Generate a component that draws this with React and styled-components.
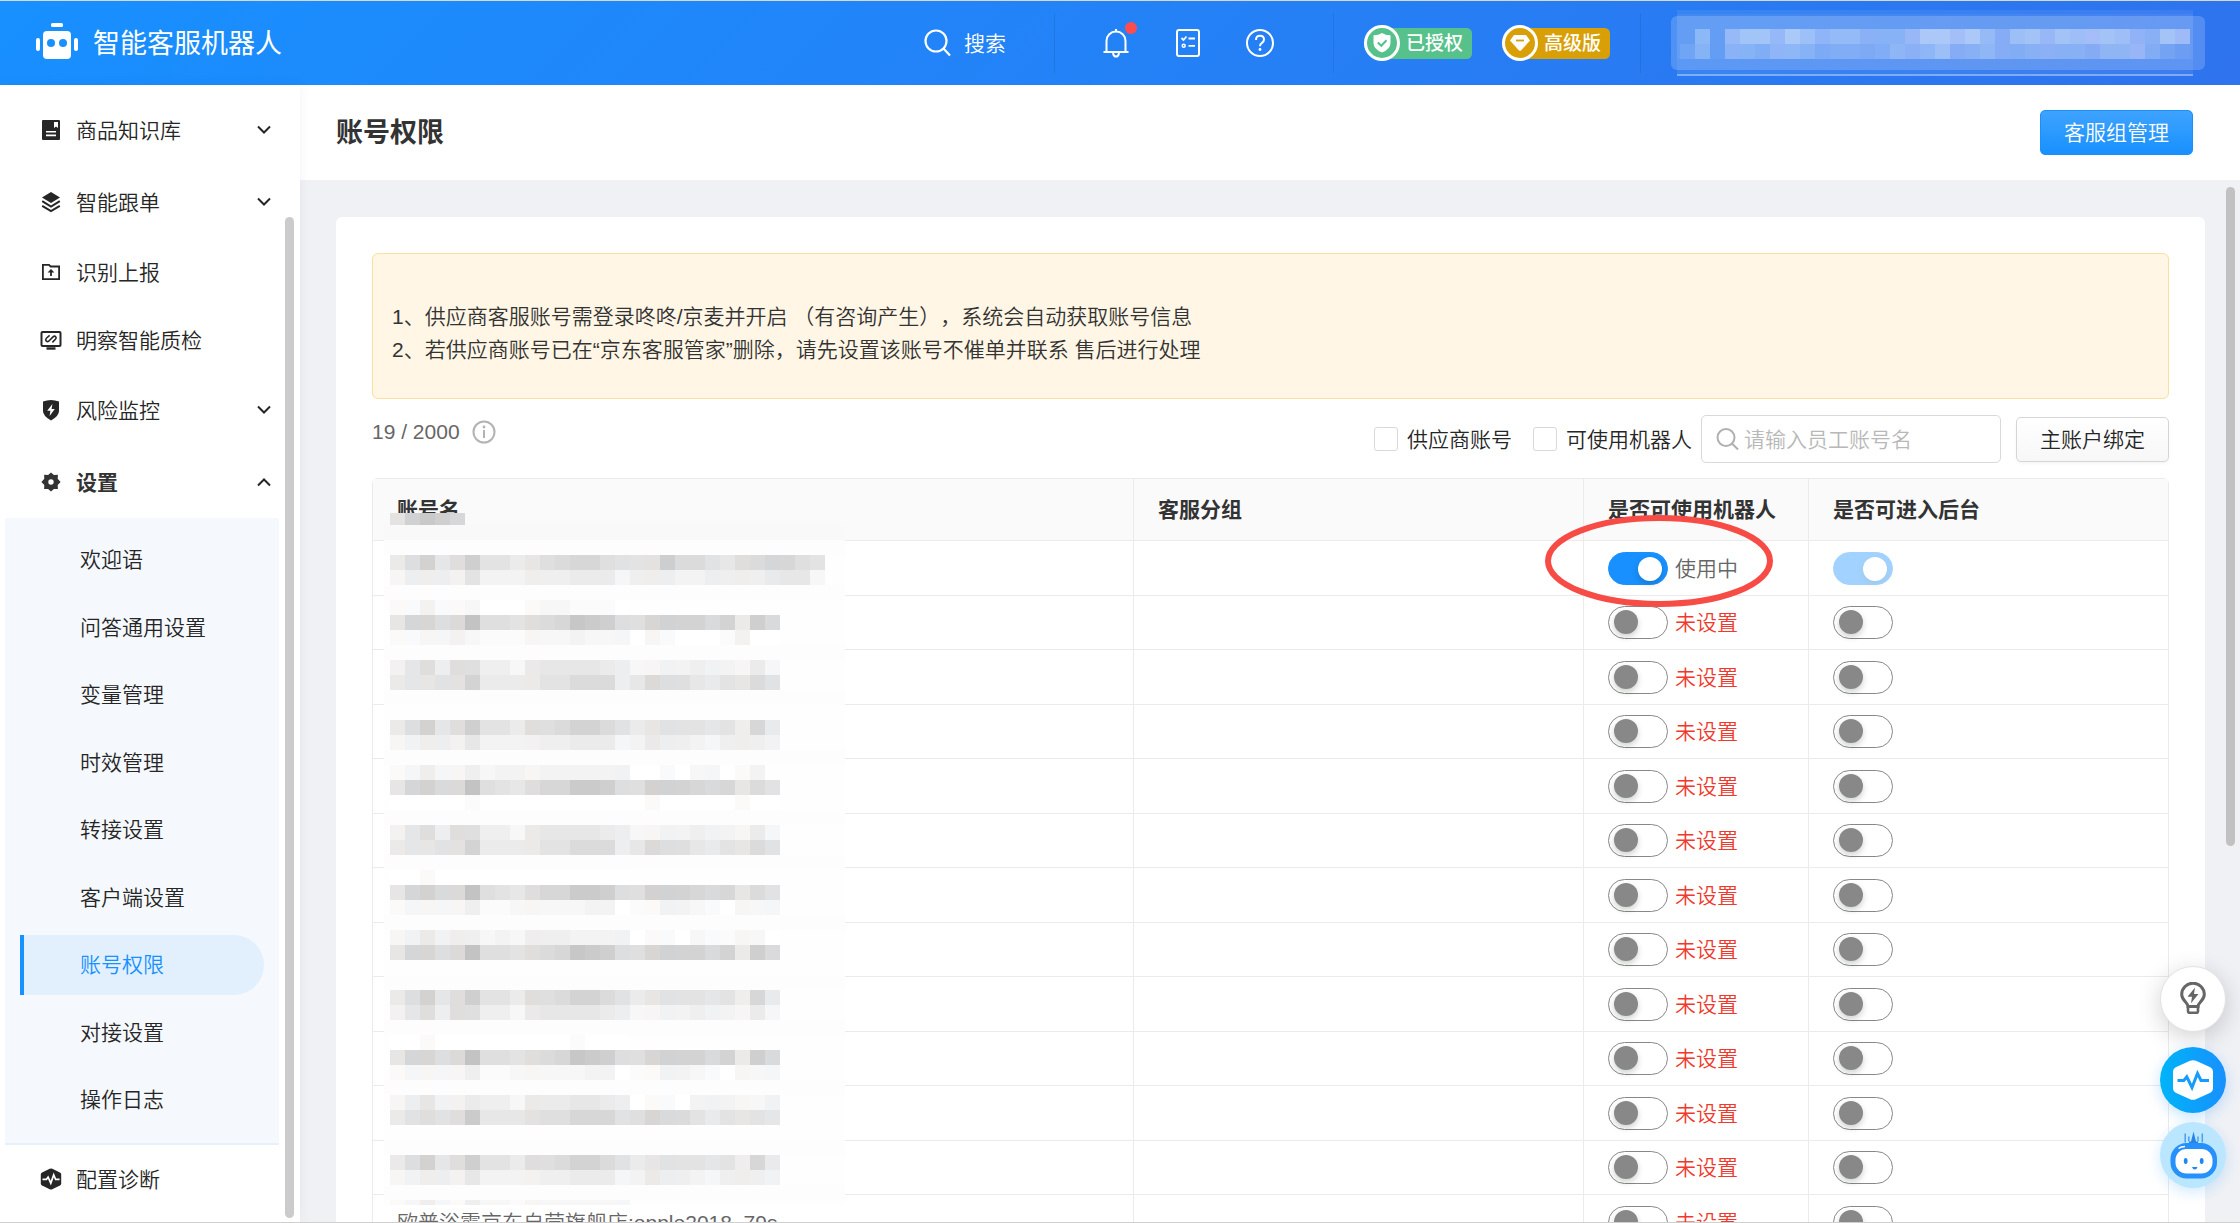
import React, { useState } from "react";
import styled, { createGlobalStyle, css } from "styled-components";

const menuTop = [
  { label: "商品知识库", icon: "book", arrow: true },
  { label: "智能跟单", icon: "layers", arrow: true },
  { label: "识别上报", icon: "folder" },
  { label: "明察智能质检", icon: "monitor" },
  { label: "风险监控", icon: "shield", arrow: true },
  { label: "设置", icon: "gear", arrow: true, open: true },
];

const subMenu = [
  "欢迎语",
  "问答通用设置",
  "变量管理",
  "时效管理",
  "转接设置",
  "客户端设置",
  "账号权限",
  "对接设置",
  "操作日志",
];

const accounts = Array.from({ length: 13 }, (_, i) => ({
  id: i,
  name: i === 12 ? "欧普浴霸京东自营旗舰店:opple2018_79s" : "",
  robot: i === 0,
  backend: i === 0,
}));

// each hex digit is the darkness of one 15px block
const STRONG = "58b68c775889bb9756777674a5";
const SOFT = "23443633334455523544324443";
const FAINT = "1242142212222222";
const DARK = "6aa89f88789aedc88abbb9b5c9";
const DARK2 = "6ab99f8768aaddc88bbba9a697";
const MID = "36848844256666542233433252";
const MID2 = "56677b55557799946988657697";
const PALE = "12222411222223301133210222";

const blurRows = [
  [555, "58b68c775689aa8777c997689aa87"],
  [570, "24443733344455524443344445662"],
  [600, "1131120001221110"],
  [615, DARK],
  [630, "11223211122232220210001300"],
  [660, MID],
  [675, MID2],
  [720, STRONG],
  [735, SOFT],
  [765, "1242242332333333001022013"],
  [780, DARK2],
  [795, "00000100000000000100000100"],
  [825, MID],
  [840, MID2],
  [870, "0010000000000000"],
  [885, DARK2],
  [900, PALE],
  [930, "23534423244433330110211220"],
  [945, DARK],
  [990, STRONG],
  [1005, MID],
  [1035, "0010000000001000"],
  [1050, DARK],
  [1065, PALE],
  [1095, "24633544255566540110333223"],
  [1110, "57878d666788aaa78a99757676"],
  [1155, STRONG],
  [1170, SOFT],
  [1200, FAINT],
];
const blurBands = [540, 585, 645, 690, 750, 810, 855, 915, 975, 1020, 1080, 1140, 1185];
const tints = "wcwcw....w.....c.wc..c.w.c...";

function blockColor(digit, col) {
  const v = 255 - parseInt(digit, 16) * 4;
  const t = digit === "0" ? "." : tints[col];
  if (t === "w") return `rgb(${v},${v - 1},${v - 3})`;
  if (t === "c") return `rgb(${v - 3},${v - 1},${v})`;
  return `rgb(${v},${v},${v})`;
}

const headerBlocks = [
  "0608998a87776558aaaa7589898a987599aaa333",
  "2506547654444466685565456555668421",
];

function Icon({ name }) {
  switch (name) {
    case "book":
      return (
        <svg width="20" height="20" viewBox="0 0 20 20" fill="#262626">
          <path d="M2 0h16a1 1 0 0 1 1 1v18a1 1 0 0 1-1 1H2a1 1 0 0 1-1-1V1a1 1 0 0 1 1-1z" />
          <path d="M13 2h4v6l-2-1.6L13 8z" fill="#fff" />
          <path d="M5 11.8h10M5 15.4h10" stroke="#fff" strokeWidth="1.6" />
        </svg>
      );
    case "layers":
      return (
        <svg width="20" height="22" viewBox="0 0 20 22" fill="none" stroke="#262626" strokeWidth="2">
          <path d="M10 1l9 5.5-9 5.5-9-5.5z" fill="#262626" stroke="none" />
          <path d="M1.2 10.2l8.8 5.4 8.8-5.4M1.2 14.8l8.8 5.4 8.8-5.4" />
        </svg>
      );
    case "folder":
      return (
        <svg width="20" height="18" viewBox="0 0 20 18" fill="none" stroke="#262626" strokeWidth="1.8">
          <path d="M1.9 1.9H8l1.6 1.6h8.5v12.6H1.9z" />
          <path d="M10 13V7.2" />
          <path d="M6.6 9.6L10 6l3.4 3.6z" fill="#262626" stroke="none" />
        </svg>
      );
    case "monitor":
      return (
        <svg width="22" height="20" viewBox="0 0 22 20" fill="none" stroke="#262626" strokeWidth="2">
          <rect x="1.5" y="2" width="19" height="14" rx="1" />
          <path d="M9.6 5.4L6.6 8q-1.6 1.5-.6 2.8t2.7.4L13 6.9q1.6-1.400 2.700-.2t-.3 2.600L12.400 12.400" strokeWidth="1.6" />
          <path d="M6.5 18.5h9" strokeWidth="2.4" />
        </svg>
      );
    case "shield":
      return (
        <svg width="20" height="22" viewBox="0 0 20 22" fill="#262626">
          <path d="M2 2.6Q10-.4 18 2.6V12q0 5-8 9.500Q2 17 2 12z" />
          <path d="M11.400 5L6.200 11.800h3.200L8.600 17l5.200-7h-3.200z" fill="#fff" />
        </svg>
      );
    case "gear":
      return (
        <svg width="20" height="20" viewBox="0 0 20 20" fill="#333">
          <path d="M10 .4l2.900 2.500 4-.2-.2 4L19.600 10l-2.900 3.100.2 4-4-.1L10 19.600 7.100 17l-4 .1.200-4L.4 10l2.900-3.200-.2-4 4 .1z" />
          <circle cx="10" cy="10" r="2.7" fill="#fff" />
        </svg>
      );
    default:
      return (
        <svg width="22" height="22" viewBox="0 0 22 22" fill="#262626">
          <path d="M9.700.8q1.300-.6 2.600 0l7.600 3.600q1.300.7 1.300 2v9.200q0 1.300-1.300 2l-7.600 3.600q-1.300.6-2.600 0l-7.600-3.600q-1.300-.7-1.300-2V6.400q0-1.300 1.300-2z" />
          <path d="M2.500 11.300h4l1.600-2.200 2.700 6 2.900-8.200 1.900 4.400h4" fill="none" stroke="#fff" strokeWidth="1.7" />
        </svg>
      );
  }
}

function AccountBlur() {
  return (
    <Mosaic width="461" height="692" viewBox="384 513 461 692" aria-hidden="true">
      <rect x="384" y="525" width="461" height="15" fill="#f9f9f9" />
      <rect x="384" y="540" width="461" height="665" fill="#fefefe" />
      {blurBands.map((y) => (
        <rect key={y} x="384" y={y} width="461" height="15" fill="#fdfdfd" />
      ))}
      {["#e4e3e2", "#d0d1d3", "#cac9c9", "#cfcfcf", "#d6d7d9"].map((c, i) => (
        <rect key={c} x={390 + i * 15} y="513" width="15" height="12" fill={c} />
      ))}
      {blurRows.map(([y, row]) =>
        row.split("").map((d, i) => (
          <rect
            key={`${y}-${i}`}
            x={390 + i * 15}
            y={y}
            width="15"
            height={y === 1200 ? 5 : 15}
            fill={blockColor(d, i)}
          />
        ))
      )}
    </Mosaic>
  );
}

export default function App() {
  const [rows, setRows] = useState(accounts);

  const toggle = (id, key) =>
    setRows(rows.map((r) => (r.id === id ? { ...r, [key]: !r[key] } : r)));

  return (
    <Page>
      <GlobalStyle />
      <Header>
        <Brand>
          <svg width="42" height="36" viewBox="0 0 42 36" fill="#fff">
            <rect x="15" y="0" width="12" height="4" rx="1.5" />
            <rect x="7" y="8" width="28" height="28" rx="4" />
            <rect x="0" y="15" width="4" height="13" rx="2" />
            <rect x="38" y="15" width="4" height="13" rx="2" />
            <circle cx="15" cy="20" r="4" fill="#1890ff" />
            <circle cx="27" cy="20" r="4" fill="#1890ff" />
          </svg>
          <span>智能客服机器人</span>
        </Brand>
        <SearchLink type="button">
          <svg width="28" height="28" viewBox="0 0 28 28" fill="none" stroke="#fff" strokeWidth="2.2">
            <circle cx="12" cy="12" r="10.5" />
            <path d="M19.5 19.5l6.500 7" />
          </svg>
          搜索
        </SearchLink>
        <Divider />
        <HeaderIcons>
          <IconButton type="button" aria-label="通知">
            <svg width="28" height="30" viewBox="0 0 28 30" fill="none" stroke="#fff" strokeWidth="2">
              <path d="M14 1v2.500M4.500 23.500V13a9.500 9.500 0 0 1 19 0v10.500M1.500 24h25M11 25q.6 3.600 3 3.600t3-3.600" />
            </svg>
            <Dot />
          </IconButton>
          <IconButton type="button" aria-label="任务">
            <svg width="28" height="30" viewBox="0 0 28 30" fill="none" stroke="#fff" strokeWidth="2">
              <rect x="3" y="2" width="22" height="26" rx="2" />
              <path d="M7.500 10l2 2 3-3.500M14.500 10.500H21M14.500 17.800H21" strokeWidth="1.8" />
              <circle cx="9.7" cy="17.8" r="1.5" strokeWidth="1.5" />
            </svg>
          </IconButton>
          <IconButton type="button" aria-label="帮助">
            <svg width="28" height="30" viewBox="0 0 28 30" fill="none" stroke="#fff" strokeWidth="2">
              <circle cx="14" cy="15" r="13" />
              <path d="M10 12q0-4.200 4-4.200t4 3.800q0 2-2 3.300t-2 3.300" />
              <circle cx="14" cy="21.500" r="1.400" fill="#fff" stroke="none" />
            </svg>
          </IconButton>
        </HeaderIcons>
        <Divider />
        <Badges>
          <Badge $color="#57c18b">
            <svg width="36" height="36" viewBox="0 0 36 36">
              <circle cx="18" cy="18" r="16.5" fill="#57c18b" stroke="#fff" strokeWidth="3" />
              <path d="M18 8q4 2.500 8.500 2.300V18q0 6-8.500 9.500Q9.500 24 9.500 18v-7.700Q14 10.500 18 8z" fill="#fff" />
              <path d="M13.800 17.500l3.500 3.300 5.200-5.500" fill="none" stroke="#57c18b" strokeWidth="2" />
            </svg>
            已授权
          </Badge>
          <Badge $color="#d99f06">
            <svg width="36" height="36" viewBox="0 0 36 36">
              <circle cx="18" cy="18" r="16.5" fill="#d99f06" stroke="#fff" strokeWidth="3" />
              <path d="M12 10h12l4 5.500L19 25.500q-1 .9-2 0L8 15.500z" fill="#fff" />
              <path d="M14 15.500h8" stroke="#d99f06" strokeWidth="1.8" />
            </svg>
            高级版
          </Badge>
        </Badges>
        <Divider />
        <UserBox>
          <svg width="516" height="66" viewBox="0 0 516 66" aria-hidden="true">
            <rect width="516" height="66" fill="#fff" fillOpacity=".07" />
            <rect y="4" width="516" height="45" fill="#fff" fillOpacity=".05" />
            <rect y="64" width="516" height="2" fill="#fff" fillOpacity=".35" />
            {headerBlocks.map((row, r) =>
              row
                .slice(0, 34)
                .split("")
                .map((d, i) => (
                  <rect
                    key={`${r}-${i}`}
                    x={3 + i * 15}
                    y={19 + r * 15}
                    width="15"
                    height="15"
                    fill={i % 3 === 0 ? "#f0e8ff" : "#fff"}
                    fillOpacity={parseInt(d, 16) * 0.045}
                  />
                ))
            )}
          </svg>
        </UserBox>
      </Header>

      <Body>
        <Sidebar>
          {menuTop.map((m) => (
            <MenuItem key={m.label} href="#" $tall={m.arrow} $bold={m.open}>
              <MenuIcon>
                <Icon name={m.icon} />
              </MenuIcon>
              <MenuLabel>{m.label}</MenuLabel>
              {m.arrow && (
                <svg width="14" height="10" viewBox="0 0 14 10" fill="none" stroke="#262626" strokeWidth="2">
                  <path d={m.open ? "M1 8.500l6-6 6 6" : "M1 1.500l6 6 6-6"} />
                </svg>
              )}
            </MenuItem>
          ))}
          <SubMenu>
            {subMenu.map((label) => (
              <SubItem key={label} href="#" $active={label === "账号权限"}>
                {label}
              </SubItem>
            ))}
          </SubMenu>
          <MenuItem href="#">
            <MenuIcon>
              <Icon name="pulse" />
            </MenuIcon>
            <MenuLabel>配置诊断</MenuLabel>
          </MenuItem>
          <SideScroll />
        </Sidebar>

        <Main>
          <TitleBar>
            <h1>账号权限</h1>
            <PrimaryButton type="button">客服组管理</PrimaryButton>
          </TitleBar>
          <Content>
            <Card>
              <Notice>
                <p>1、供应商客服账号需登录咚咚/京麦并开启 （有咨询产生），系统会自动获取账号信息</p>
                <p>2、若供应商账号已在“京东客服管家”删除，请先设置该账号不催单并联系 售后进行处理</p>
              </Notice>
              <Toolbar>
                <Count>
                  19 / 2000
                  <svg width="24" height="24" viewBox="0 0 24 24" fill="none" stroke="#b3b3b3" strokeWidth="2">
                    <circle cx="12" cy="12" r="10.5" />
                    <path d="M12 10v8" />
                    <circle cx="12" cy="7" r="1.4" fill="#b3b3b3" stroke="none" />
                  </svg>
                </Count>
                <Check>
                  <input type="checkbox" />
                  供应商账号
                </Check>
                <Check>
                  <input type="checkbox" />
                  可使用机器人
                </Check>
                <SearchBox>
                  <svg width="24" height="24" viewBox="0 0 24 24" fill="none" stroke="#b0b0b0" strokeWidth="2">
                    <circle cx="10" cy="10.5" r="8.5" />
                    <path d="M16 16.5l6 6" />
                  </svg>
                  <input type="text" placeholder="请输入员工账号名" aria-label="请输入员工账号名" />
                </SearchBox>
                <PlainButton type="button">主账户绑定</PlainButton>
              </Toolbar>
              <TableWrap>
                <Table>
                  <colgroup>
                    <col />
                    <col width="450" />
                    <col width="225" />
                    <col width="359" />
                  </colgroup>
                  <thead>
                    <tr>
                      <th>账号名</th>
                      <th>客服分组</th>
                      <th>是否可使用机器人</th>
                      <th>是否可进入后台</th>
                    </tr>
                  </thead>
                  <tbody>
                    {rows.map((r) => (
                      <tr key={r.id}>
                        <td>{r.name}</td>
                        <td />
                        <td>
                          <SwitchLabel $on={r.robot}>
                            <Switch
                              type="checkbox"
                              checked={r.robot}
                              onChange={() => toggle(r.id, "robot")}
                            />
                            {r.robot ? "使用中" : "未设置"}
                          </SwitchLabel>
                          {r.id === 0 && (
                            <Circle width="230" height="92" viewBox="0 0 230 92" aria-hidden="true">
                              <ellipse cx="115" cy="46" rx="111" ry="43" fill="none" stroke="#f74b45" strokeWidth="6" />
                            </Circle>
                          )}
                        </td>
                        <td>
                          <SwitchLabel>
                            <Switch
                              type="checkbox"
                              aria-label="是否可进入后台"
                              checked={r.backend}
                              disabled={r.id === 0}
                              onChange={() => toggle(r.id, "backend")}
                            />
                          </SwitchLabel>
                        </td>
                      </tr>
                    ))}
                  </tbody>
                </Table>
                <AccountBlur />
              </TableWrap>
            </Card>
          </Content>
          <MainScroll />
        </Main>
      </Body>

      <FloatBar>
        <FloatButton type="button" aria-label="建议">
          <svg width="28" height="34" viewBox="0 0 28 34" fill="none" stroke="#666" strokeWidth="3">
            <path d="M9 24.500c0-4-6.300-6-6.300-12a11.300 11.300 0 0 1 22.600 0c0 6-6.300 8-6.300 12z" />
            <path d="M9 24v5q0 1.800 1.800 1.800h6.400q1.800 0 1.800-1.800v-5" strokeWidth="2.6" />
            <path d="M16 5.500L8.500 14.800h4.500l-1 6.400 7.500-9.200H15z" fill="#666" stroke="none" />
          </svg>
        </FloatButton>
        <FloatButton type="button" aria-label="诊断" $blue>
          <svg width="40" height="40" viewBox="0 0 40 40">
            <path d="M16.500 1q3.500-1.700 7 0l13.800 6.300Q40 8.600 40 11.500v17q0 2.900-2.700 4.200L23.500 39q-3.500 1.700-7 0L2.700 32.700Q0 31.400 0 28.500v-17Q0 8.600 2.700 7.300z" fill="#fff" />
            <path d="M4.500 20.500h6.300l3-3.700 5.200 10.700 5.500-14 3.500 7h8" fill="none" stroke="#169bff" strokeWidth="3" />
          </svg>
        </FloatButton>
        <FloatButton type="button" aria-label="智能助手" $pale>
          <svg width="66" height="66" viewBox="0 0 66 66">
            <path d="M33.500 9.500L36 19.500h2v2.500h-9v-2.500h2z" fill="#2a82e8" />
            <path d="M25.200 11.500v9M42.300 11.500v9" stroke="#4aa0ee" strokeWidth="1.5" />
            <path d="M28.800 14.500v5M38 14.500v5" stroke="#4aa0ee" strokeWidth="1.5" />
            <rect x="10.5" y="21" width="46.5" height="35.5" rx="16" fill="#2690fb" />
            <rect x="15.5" y="27" width="37" height="24.5" rx="11" fill="#fff" />
            <path d="M18.500 26.500q2.500-2 6.500-2" stroke="#fff" strokeWidth="1.5" fill="none" />
            <ellipse cx="25.7" cy="39" rx="1.9" ry="2.9" fill="#1e86f5" />
            <ellipse cx="41.7" cy="39" rx="1.9" ry="2.9" fill="#1e86f5" />
            <path d="M32 45h5.500q-.8 2.500-2.700 2.500T32 45z" fill="#1e86f5" />
          </svg>
        </FloatButton>
      </FloatBar>
    </Page>
  );
}

const GlobalStyle = createGlobalStyle`
  * {
    box-sizing: border-box;
  }
  body {
    margin: 0;
    font-family: "Liberation Sans", "Noto Sans CJK SC", sans-serif;
    font-size: 21px;
    font-weight: 350;
    line-height: 33px;
    text-spacing-trim: space-all;
    color: #262626;
  }
  button, input {
    font: inherit;
    color: inherit;
    margin: 0;
  }
  h1, p {
    margin: 0;
  }
  a {
    color: inherit;
    text-decoration: none;
  }
  svg {
    flex-shrink: 0;
  }
`;

const Page = styled.div`
  display: flex;
  flex-direction: column;
  height: 100vh;
  overflow: hidden;
  border-top: 1px solid #d5d9dd;
  border-bottom: 1px solid #cfcfcf;
`;

const Header = styled.header`
  display: flex;
  align-items: center;
  flex-shrink: 0;
  height: 84px;
  padding: 0 35px 0 36px;
  color: #fff;
  background: linear-gradient(135deg, #1890ff, #2f73ee);
`;

const Brand = styled.div`
  display: flex;
  align-items: center;
  gap: 15px;
  margin-right: auto;
  font-size: 27px;
  font-weight: 400;
  svg {
    margin-bottom: 4px;
  }
  span {
    padding-top: 2px;
  }
`;

const SearchLink = styled.button`
  display: flex;
  align-items: center;
  gap: 12px;
  margin-right: 48px;
  padding: 0;
  border: 0;
  background: none;
`;

const Divider = styled.span`
  width: 1px;
  height: 60px;
  background: rgba(0, 0, 0, 0.08);
`;

const HeaderIcons = styled.div`
  display: flex;
  gap: 44px;
  margin: 0 59px 0 47px;
`;

const IconButton = styled.button`
  position: relative;
  display: flex;
  padding: 0;
  border: 0;
  background: none;
`;

const Dot = styled.span`
  position: absolute;
  top: -6px;
  right: -7px;
  width: 12px;
  height: 12px;
  border-radius: 50%;
  background: #ff4d4f;
`;

const Badges = styled.div`
  display: flex;
  gap: 30px;
  margin: 0 30px;
`;

const Badge = styled.span`
  display: flex;
  align-items: center;
  gap: 6px;
  width: 108px;
  height: 31px;
  border-radius: 18px 6px 6px 18px;
  font-size: 19px;
  font-weight: 500;
  white-space: nowrap;
  background: ${({ $color }) => $color};
`;

const UserBox = styled.div`
  display: flex;
  align-items: center;
  width: 534px;
  height: 54px;
  margin-left: 30px;
  padding-left: 6px;
  border-radius: 6px;
  background: rgba(255, 255, 255, 0.18);
`;

const Body = styled.div`
  display: flex;
  flex: 1;
  min-height: 0;
`;

const Sidebar = styled.nav`
  position: relative;
  z-index: 1;
  flex-shrink: 0;
  width: 300px;
  padding-top: 9px;
  overflow: hidden;
  background: #fff;
  box-shadow: 0 0 12px rgba(0, 0, 0, 0.05);
`;

const MenuItem = styled.a`
  display: flex;
  align-items: center;
  height: ${({ $tall }) => ($tall ? "72px" : "68px")};
  padding: 0 29px 0 40px;
  ${({ $bold }) =>
    $bold &&
    css`
      font-weight: 700;
      color: #333;
    `}
`;

const MenuIcon = styled.span`
  display: flex;
  justify-content: center;
  width: 22px;
`;

const MenuLabel = styled.span`
  flex: 1;
  padding-left: 14px;
`;

const SubMenu = styled.div`
  display: flex;
  flex-direction: column;
  margin: 0 21px 0 5px;
  padding: 5px 15px 13px;
  background: #f5f9fd;
  border-bottom: 2px solid #e8f1fa;
`;

const SubItem = styled.a`
  height: 60px;
  margin-top: 7px;
  padding-left: 56px;
  border-left: 4px solid transparent;
  border-radius: 0 30px 30px 0;
  line-height: 60px;
  &:nth-child(even) {
    margin-top: 8px;
  }
  ${({ $active }) =>
    $active &&
    css`
      color: #1890ff;
      background: #e2f0fe;
      border-left-color: #1890ff;
    `}
`;

const SideScroll = styled.div`
  position: absolute;
  top: 132px;
  right: 6px;
  bottom: 4px;
  width: 9px;
  border-radius: 5px;
  background: #cbcbcb;
`;

const Main = styled.main`
  position: relative;
  display: flex;
  flex: 1;
  flex-direction: column;
  min-width: 0;
  background: #eff1f5;
`;

const TitleBar = styled.div`
  display: flex;
  align-items: center;
  justify-content: space-between;
  flex-shrink: 0;
  height: 95px;
  padding: 0 47px 0 36px;
  background: #fff;
  h1 {
    padding-top: 2px;
    font-size: 27px;
    font-weight: 700;
    color: #333;
  }
`;

const PrimaryButton = styled.button`
  height: 45px;
  padding: 0 23px;
  border: 1px solid #1890ff;
  border-radius: 5px;
  color: #fff;
  background: linear-gradient(#3fa3ff, #1890ff);
`;

const Content = styled.div`
  flex: 1;
  min-height: 0;
  overflow: hidden;
  padding: 37px 35px 0 36px;
`;

const Card = styled.section`
  padding: 36px;
  border-radius: 6px;
  background: #fff;
`;

const Notice = styled.div`
  height: 146px;
  padding: 46px 19px;
  border: 1px solid #fbdf9d;
  border-radius: 6px;
  color: #333;
  background: #fff6e5;
`;

const Toolbar = styled.div`
  display: flex;
  align-items: center;
  height: 48px;
  margin: 16px 0 15px;
`;

const Count = styled.div`
  display: flex;
  align-items: center;
  align-self: flex-start;
  gap: 12px;
  margin-right: auto;
  color: #666;
`;

const Check = styled.label`
  display: flex;
  align-items: center;
  gap: 9px;
  & + & {
    margin: 0 9px 0 21px;
  }
  input {
    appearance: none;
    width: 24px;
    height: 24px;
    border: 1px solid #d9d9d9;
    border-radius: 3px;
    background: #fff;
  }
  input:checked {
    background: #1890ff;
  }
`;

const SearchBox = styled.div`
  display: flex;
  align-items: center;
  gap: 4px;
  width: 300px;
  height: 48px;
  margin-right: 15px;
  padding: 0 14px;
  border: 1px solid #d9d9d9;
  border-radius: 5px;
  input {
    flex: 1;
    min-width: 0;
    padding: 0;
    border: 0;
    outline: 0;
    background: none;
  }
  input::placeholder {
    color: #b8b8b8;
    opacity: 1;
  }
`;

const PlainButton = styled.button`
  height: 45px;
  padding: 0 23px;
  border: 1px solid #d5d5d5;
  border-radius: 5px;
  background: linear-gradient(#fff, #f7f7f7);
  box-shadow: 0 2px 3px rgba(0, 0, 0, 0.04);
`;

const TableWrap = styled.div`
  position: relative;
  border: 1px solid #ebebeb;
  border-radius: 6px;
`;

const Table = styled.table`
  width: 100%;
  table-layout: fixed;
  border-collapse: separate;
  border-spacing: 0;
  th,
  td {
    padding: 0 24px;
    border-right: 1px solid #ebebeb;
    border-bottom: 1px solid #ebebeb;
    text-align: left;
    white-space: nowrap;
  }
  th:last-child,
  td:last-child {
    border-right: 0;
  }
  th {
    height: 62px;
    font-weight: 700;
    color: #333;
    background: #fafafa;
  }
  td {
    position: relative;
    height: 54px;
    color: #666;
  }
  tr:nth-child(odd) td {
    height: 55px;
  }
`;

const SwitchLabel = styled.label`
  display: flex;
  align-items: center;
  gap: 7px;
  color: ${({ $on }) => ($on ? "#666" : "#f0392c")};
`;

const Switch = styled.input`
  appearance: none;
  position: relative;
  width: 60px;
  height: 33px;
  border: 1px solid #888;
  border-radius: 17px;
  background: #fff;
  &::before {
    content: "";
    position: absolute;
    top: 3px;
    left: 5px;
    width: 24px;
    height: 24px;
    border-radius: 50%;
    background: #888;
    box-shadow: 0 3px 6px rgba(0, 35, 11, 0.2);
  }
  &:checked {
    border-color: #1890ff;
    background: #1890ff;
  }
  &:checked::before {
    top: 4px;
    left: 29px;
    background: #fff;
  }
  &:disabled {
    opacity: 0.4;
  }
`;

const Circle = styled.svg`
  position: absolute;
  top: -26px;
  left: -40px;
  z-index: 2;
  pointer-events: none;
`;

const Mosaic = styled.svg`
  position: absolute;
  top: 34px;
  left: 11px;
  pointer-events: none;
`;

const MainScroll = styled.div`
  position: absolute;
  top: 102px;
  right: 5px;
  width: 9px;
  height: 58%;
  border-radius: 5px;
  background: #c1c1c1;
`;

const FloatBar = styled.div`
  position: fixed;
  right: 14px;
  bottom: 35px;
  z-index: 3;
  display: flex;
  flex-direction: column;
  gap: 9px;
`;

const FloatButton = styled.button`
  display: flex;
  align-items: center;
  justify-content: center;
  width: 66px;
  height: 66px;
  padding: 0;
  border: 1px solid #e2e2e2;
  border-radius: 50%;
  background: #fff;
  box-shadow: 0 6px 24px rgba(0, 0, 0, 0.18);
  &:first-child {
    margin-bottom: 6px;
  }
  ${({ $blue }) =>
    $blue &&
    css`
      border: 0;
      background: linear-gradient(90deg, #00b4f7, #1890ff);
      box-shadow: 0 4px 14px rgba(24, 144, 255, 0.25);
    `}
  ${({ $pale }) =>
    $pale &&
    css`
      border: 0;
      background: #bae6ff;
      box-shadow: 0 4px 14px rgba(24, 144, 255, 0.2);
    `}
`;
